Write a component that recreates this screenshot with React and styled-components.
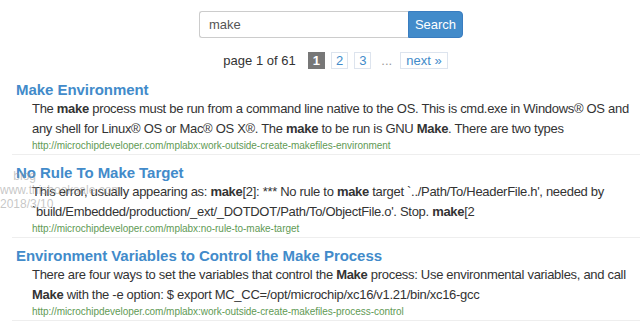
import React from "react";
import styled, { createGlobalStyle } from "styled-components";

const GlobalStyle = createGlobalStyle`
  body {
    margin: 0;
    background: #fff;
    font-family: "Liberation Sans", Arial, sans-serif;
    color: #333;
  }
`;

const Page = styled.div`
  width: 640px;
  height: 322px;
  overflow: hidden;
`;

const SearchForm = styled.form`
  display: flex;
  justify-content: center;
  padding-top: 11px;
  padding-left: 22px;
`;

const SearchInput = styled.input`
  width: 209px;
  height: 27px;
  box-sizing: border-box;
  border: 1px solid #ccc;
  border-right: none;
  border-radius: 3px 0 0 3px;
  padding: 0 9px;
  font-family: "Liberation Sans", Arial, sans-serif;
  font-size: 13px;
  color: #555;
  outline: none;
`;

const SearchButton = styled.button`
  width: 55px;
  height: 27px;
  border: 1px solid #3a7dc0;
  border-radius: 0 4px 4px 0;
  background: #428bca;
  color: #fff;
  font-family: "Liberation Sans", Arial, sans-serif;
  font-size: 13px;
  padding: 0;
`;

const Pager = styled.div`
  display: flex;
  align-items: center;
  justify-content: center;
  margin-top: 13px;
  height: 18px;
  padding-left: 37px;
  font-size: 13px;
`;

const PageInfo = styled.span`
  color: #333;
  margin-right: 12px;
`;

const PageLink = styled.a`
  display: inline-block;
  height: 17px;
  line-height: 16px;
  box-sizing: border-box;
  padding: 0 ${(p) => (p.wide ? "5px" : "4px")};
  min-width: 17px;
  text-align: center;
  border: 1px solid ${(p) => (p.active ? "#777" : "#dde4ee")};
  background: ${(p) => (p.active ? "#777" : "#fff")};
  color: ${(p) => (p.active ? "#fff" : "#428bca")};
  font-weight: ${(p) => (p.active ? "bold" : "normal")};
  margin-right: 6px;
  text-decoration: none;
`;

const Ellipsis = styled.span`
  color: #999;
  margin: 0 8px 0 4px;
`;

const Results = styled.div`
  margin-top: 3px;
`;

const Result = styled.div`
  position: relative;
  margin-left: 12px;
  padding: 9px 0 2px 4px;
  border-bottom: 1px solid #eee;
`;

const Title = styled.a`
  display: block;
  font-size: 15px;
  line-height: 18px;
  font-weight: bold;
  letter-spacing: -0.05px;
  color: #428bca;
  text-decoration: none;
`;

const Snippet = styled.p`
  margin: 0 0 0 16px;
  font-size: 13px;
  line-height: 20px;
  letter-spacing: -0.3px;
  color: #333;
  white-space: nowrap;
`;

const Url = styled.div`
  margin-left: 16px;
  font-size: 10px;
  line-height: 13px;
  letter-spacing: -0.05px;
  color: #5f9a55;
`;

const Watermark = styled.div`
  position: absolute;
  left: -12px;
  top: 14px;
  font-size: 12px;
  line-height: 14px;
  color: rgba(150, 150, 150, 0.55);
  pointer-events: none;
`;

const results = [
  {
    title: "Make Environment",
    lines: [
      <>The <b>make</b> process must be run from a command line native to the OS. This is cmd.exe in Windows® OS and</>,
      <>any shell for Linux® OS or Mac® OS X®. The <b>make</b> to be run is GNU <b>Make</b>. There are two types</>,
    ],
    url: "http://microchipdeveloper.com/mplabx:work-outside-create-makefiles-environment",
  },
  {
    title: "No Rule To Make Target",
    lines: [
      <>This error, usually appearing as: <b>make</b>[2]: *** No rule to <b>make</b> target `../Path/To/HeaderFile.h', needed by</>,
      <>`build/Embedded/production/_ext/_DOTDOT/Path/To/ObjectFile.o'. Stop. <b>make</b>[2</>,
    ],
    url: "http://microchipdeveloper.com/mplabx:no-rule-to-make-target",
    watermark: true,
  },
  {
    title: "Environment Variables to Control the Make Process",
    lines: [
      <>There are four ways to set the variables that control the <b>Make</b> process: Use environmental variables, and call</>,
      <><b>Make</b> with the -e option: $ export MC_CC=/opt/microchip/xc16/v1.21/bin/xc16-gcc</>,
    ],
    url: "http://microchipdeveloper.com/mplabx:work-outside-create-makefiles-process-control",
  },
];

export default function App() {
  return (
    <Page>
      <GlobalStyle />
      <SearchForm onSubmit={(e) => e.preventDefault()}>
        <SearchInput defaultValue="make" />
        <SearchButton type="submit">Search</SearchButton>
      </SearchForm>
      <Pager>
        <PageInfo>page 1 of 61</PageInfo>
        <PageLink active>1</PageLink>
        <PageLink>2</PageLink>
        <PageLink>3</PageLink>
        <Ellipsis>...</Ellipsis>
        <PageLink wide>next »</PageLink>
      </Pager>
      <Results>
        {results.map((r) => (
          <Result key={r.title}>
            <Title href="#">{r.title}</Title>
            {r.lines.map((line, i) => (
              <Snippet key={i}>{line}</Snippet>
            ))}
            <Url>{r.url}</Url>
            {r.watermark && (
              <Watermark>
                <div>&nbsp;&nbsp;&nbsp;&nbsp;blog</div>
                <div>www.thisbooksale.com</div>
                <div>2018/3/10</div>
              </Watermark>
            )}
          </Result>
        ))}
      </Results>
    </Page>
  );
}
